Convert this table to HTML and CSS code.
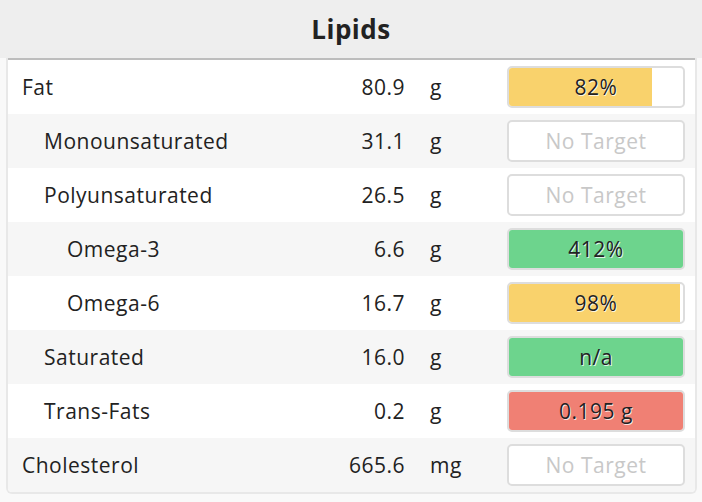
FILE: index.html
```html
<!DOCTYPE html>
<html>
<head>
<meta charset="utf-8">
<link rel="stylesheet" href="styles.css">
</head>
<body>
<div class="header">Lipids</div>
<div class="card">
  <div class="row">
    <div class="name l0">Fat</div><div class="amt">80.9</div><div class="unit">g</div>
    <div class="bar"><div class="fill yellow" style="width:82%"></div><span class="label">82%</span></div>
  </div>
  <div class="row alt">
    <div class="name l1">Monounsaturated</div><div class="amt">31.1</div><div class="unit">g</div>
    <div class="bar"><span class="label none">No Target</span></div>
  </div>
  <div class="row">
    <div class="name l1">Polyunsaturated</div><div class="amt">26.5</div><div class="unit">g</div>
    <div class="bar"><span class="label none">No Target</span></div>
  </div>
  <div class="row alt">
    <div class="name l2">Omega-3</div><div class="amt">6.6</div><div class="unit">g</div>
    <div class="bar"><div class="fill green" style="width:100%"></div><span class="label">412%</span></div>
  </div>
  <div class="row">
    <div class="name l2">Omega-6</div><div class="amt">16.7</div><div class="unit">g</div>
    <div class="bar"><div class="fill yellow" style="width:98%"></div><span class="label">98%</span></div>
  </div>
  <div class="row alt">
    <div class="name l1">Saturated</div><div class="amt">16.0</div><div class="unit">g</div>
    <div class="bar"><div class="fill green" style="width:100%"></div><span class="label">n/a</span></div>
  </div>
  <div class="row">
    <div class="name l1">Trans-Fats</div><div class="amt">0.2</div><div class="unit">g</div>
    <div class="bar"><div class="fill red" style="width:100%"></div><span class="label">0.195 g</span></div>
  </div>
  <div class="row alt">
    <div class="name l0">Cholesterol</div><div class="amt">665.6</div><div class="unit">mg</div>
    <div class="bar"><span class="label none">No Target</span></div>
  </div>
</div>
</body>
</html>
```

FILE: styles.css
```css
html, body {
  margin: 0;
  padding: 0;
  background: #f9f9f9;
  font-family: "Open Sans", "Noto Sans", sans-serif;
  color: #222;
}
.header {
  height: 58px;
  background: #eeeeee;
  display: flex;
  align-items: center;
  justify-content: center;
  font-weight: 700;
  font-size: 26px;
  letter-spacing: 0.5px;
  color: #222;
}
.card {
  margin: 0 5px 0 6px;
  border: 2px solid #e8e8e8;
  border-top: none;
  border-radius: 0 0 6px 6px;
  background: #fff;
  overflow: hidden;
}
.card::before {
  content: "";
  display: block;
  height: 2px;
  background: #bdbdbd;
}
.row {
  display: grid;
  grid-template-columns: 1fr 80px 102px 178px;
  align-items: center;
  height: 54px;
  padding-right: 10px;
  font-size: 21px;
  letter-spacing: 0.5px;
  background: #fff;
}
.row.alt {
  background: #f6f6f6;
}
.name.l0 { padding-left: 14px; }
.name.l1 { padding-left: 36px; }
.name.l2 { padding-left: 59px; }
.amt { text-align: right; }
.unit { padding-left: 25px; }
.bar {
  position: relative;
  height: 38px;
  border: 2px solid #dddddd;
  border-radius: 5px;
  background: #fff;
  overflow: hidden;
  display: flex;
  align-items: center;
  justify-content: center;
}
.fill {
  position: absolute;
  left: 0;
  top: 0;
  bottom: 0;
}
.fill.yellow { background: #f9d26c; }
.fill.green { background: #6dd48d; }
.fill.red { background: #f08074; }
.label {
  position: relative;
  font-size: 21px;
  color: #222;
  text-shadow: 1px 1px 0 rgba(255,255,255,0.8);
}
.label.none {
  color: #c8c8c8;
  text-shadow: none;
}
```
